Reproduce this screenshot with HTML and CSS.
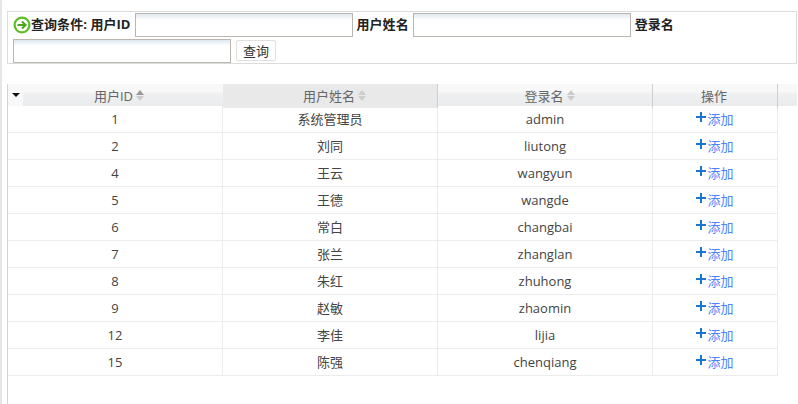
FILE: index.html
```html
<!DOCTYPE html>
<html lang="zh">
<head>
<meta charset="utf-8">
<title>用户查询</title>
<link rel="stylesheet" href="styles.css">
</head>
<body>
<div class="page">
  <form class="query">
    <svg class="go" width="18" height="18" viewBox="0 0 18 18"><circle cx="9" cy="9" r="7.4" fill="#fff" stroke="#5cbd24" stroke-width="2.2"/><path d="M4.5 9H12M9 5.6 12.6 9 9 12.4" fill="none" stroke="#4aa61c" stroke-width="2"/></svg><b>查询条件: 用户ID</b><input class="field" type="text"><b class="label">用户姓名</b><input class="field" type="text"><b class="label">登录名</b><input class="field first-wrap" type="text"><button class="btn" type="button">查询</button>
  </form>
  <div class="grid">
    <div class="head">
      <div class="th first"><span class="menu"></span>用户ID<span class="sort up"></span></div>
      <div class="th active">用户姓名<span class="sort"></span></div>
      <div class="th">登录名<span class="sort"></span></div>
      <div class="th last">操作</div>
    </div>
    <div class="row"><div>1</div><div>系统管理员</div><div>admin</div><div><a class="add"><i class="plus"></i>添加</a></div></div>
    <div class="row"><div>2</div><div>刘同</div><div>liutong</div><div><a class="add"><i class="plus"></i>添加</a></div></div>
    <div class="row"><div>4</div><div>王云</div><div>wangyun</div><div><a class="add"><i class="plus"></i>添加</a></div></div>
    <div class="row"><div>5</div><div>王德</div><div>wangde</div><div><a class="add"><i class="plus"></i>添加</a></div></div>
    <div class="row"><div>6</div><div>常白</div><div>changbai</div><div><a class="add"><i class="plus"></i>添加</a></div></div>
    <div class="row"><div>7</div><div>张兰</div><div>zhanglan</div><div><a class="add"><i class="plus"></i>添加</a></div></div>
    <div class="row"><div>8</div><div>朱红</div><div>zhuhong</div><div><a class="add"><i class="plus"></i>添加</a></div></div>
    <div class="row"><div>9</div><div>赵敏</div><div>zhaomin</div><div><a class="add"><i class="plus"></i>添加</a></div></div>
    <div class="row"><div>12</div><div>李佳</div><div>lijia</div><div><a class="add"><i class="plus"></i>添加</a></div></div>
    <div class="row"><div>15</div><div>陈强</div><div>chenqiang</div><div><a class="add"><i class="plus"></i>添加</a></div></div>
  </div>
</div>
</body>
</html>
```
FILE: styles.css
```css
* { box-sizing: border-box; }
html, body { margin: 0; height: 100%; overflow: hidden; background: #fff; }
body { font-family: "Open Sans", "Noto Sans CJK SC", sans-serif; font-size: 13px; color: #333; }
.page { height: 404px; padding: 11px 1px 0 5px; border-left: 2px solid #e6e6e6; }
.query { height: 53px; border: 1px solid #dcdcdc; padding: 0 0 0 5px; line-height: 26px; color: #222; }
.query b { font-weight: 700; letter-spacing: 0.05px; line-height: 22px; vertical-align: 1px; }
.go { vertical-align: -4px; }
.field { width: 218px; height: 24px; vertical-align: top; margin: 1px 0 0 4px; padding: 0 4px; border: 1px solid #bcb6b0; border-radius: 0; background: linear-gradient(#dfe8ef, #fff 6px); }
.label { margin-left: 4px; }
.first-wrap { margin-left: 0; }
.btn { height: 21px; width: 40px; margin: 2px 0 0 5px; padding: 1px 0 0; vertical-align: top; border: 1px solid #e0e0e0; border-radius: 2px; background: #fff; font: inherit; color: #333; line-height: 18px; }
.grid { margin-top: 20px; border-left: 1px solid #d6d6d6; height: 320px; }
.head { display: grid; grid-template-columns: 215px 215px 215px 125px 1fr; height: 22px; background: linear-gradient(#f8f8f8 0, #f8f8f8 35%, #eff0f1 45%, #e9ebec 100%); }
.th { position: relative; text-align: center; line-height: 24px; color: #666; border-right: 1px solid #cfcfcf; white-space: nowrap; padding-right: 2px; }
.th.first { border-right: 0; padding-right: 4px; }
.th.active { background: #e9e9e9; }
.menu { position: absolute; left: 0; top: 0; width: 15px; height: 22px; background: #f8f8f8; }
.menu::before { content: ""; position: absolute; left: 4px; top: 9px; border: 4px solid transparent; border-top: 4px solid #111; border-bottom: 0; }
.sort { display: inline-block; position: relative; width: 0; height: 0; }
.sort::before, .sort::after { content: ""; position: absolute; left: 3px; border: 4px solid transparent; }
.sort::before { top: -11px; border-top: 0; border-bottom: 5px solid #ccc; }
.sort::after { top: -5px; border-bottom: 0; border-top: 5px solid #ccc; }
.sort.up::before { border-bottom-color: #999; }
.row { display: grid; grid-template-columns: 215px 215px 215px 125px; height: 27px; }
.row > div { text-align: center; line-height: 26px; color: #444; border-right: 1px solid #ececec; border-bottom: 1px solid #ececec; }
.add { color: #4c84ff; }
.plus { display: inline-block; position: relative; width: 10px; height: 10px; margin-right: 1px; top: -2px; background: linear-gradient(#1c75d0, #1c75d0) center/10px 2px no-repeat, linear-gradient(#1c75d0, #1c75d0) center/2px 10px no-repeat; }
```
